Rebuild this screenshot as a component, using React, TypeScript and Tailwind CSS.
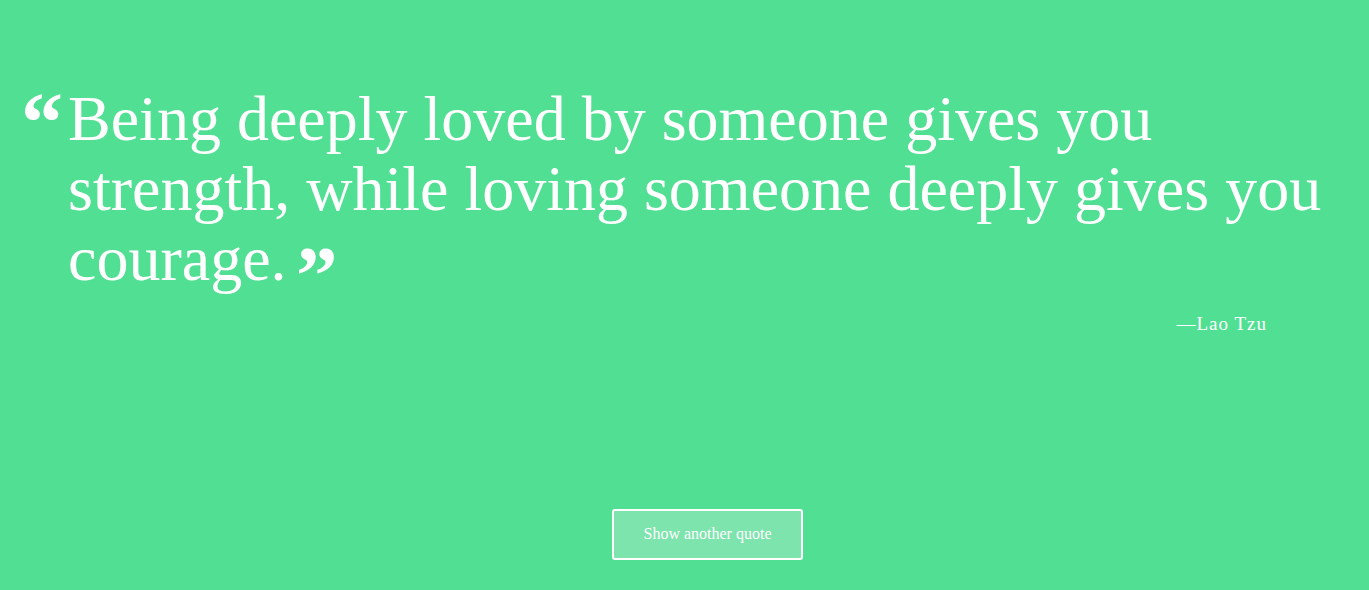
export default function App() {
  return (
    <div className="h-[590px] w-full bg-[#51df93] text-white font-['Liberation_Serif',serif] overflow-hidden">
      <div className="flex pt-[84px] pl-[21px] pr-[30px]">
        <span className="text-[84px] leading-none font-bold w-[47px] -mt-[3px] shrink-0 select-none">&ldquo;</span>
        <p className="text-[64px] leading-[70px]">
          Being deeply loved by someone gives you strength, while loving someone deeply gives you courage.
          <span className="inline-block ml-[9px] font-bold translate-y-[6px] scale-[1.3] origin-top-left">&rdquo;</span>
        </p>
      </div>
      <div className="text-right pr-[102px] mt-[16px] text-[19px] tracking-[1px]">&mdash;Lao Tzu</div>
      <div className="flex justify-center mt-[170px]">
        <button className="w-[191px] h-[51px] ml-[46px] border-2 border-white rounded-[3px] bg-[#7de4ad] text-[16px] text-white">
          Show another quote
        </button>
      </div>
    </div>
  );
}
